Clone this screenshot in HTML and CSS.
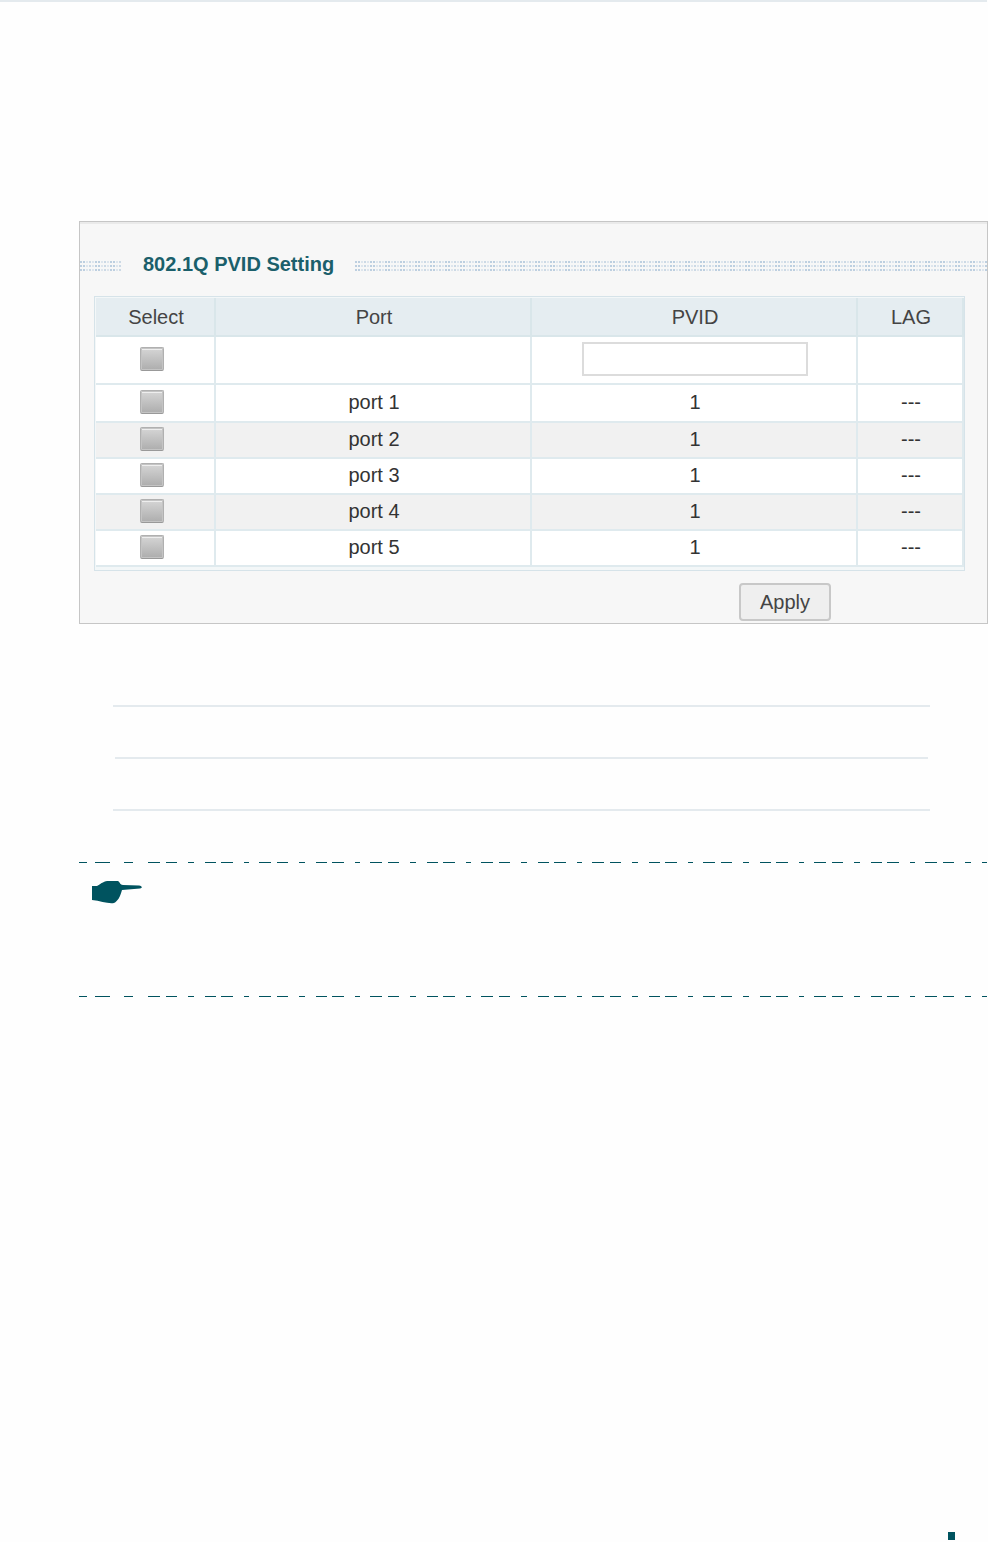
FILE: index.html
```html
<!DOCTYPE html>
<html lang="en">
<head>
<meta charset="utf-8">
<meta name="viewport" content="width=device-width, initial-scale=1">
<title>802.1Q PVID Setting</title>
<link rel="stylesheet" href="styles.css">
</head>
<body>
<div class="page">
  <header class="topbar"></header>
  <main class="content">
    <form class="panel">
      <div class="heading">
        <span class="dots dots-lead"></span>
        <h1 class="title">802.1Q PVID Setting</h1>
        <span class="dots dots-fill"></span>
      </div>
      <div class="frame">
        <table class="ports">
          <colgroup><col class="c-select"><col class="c-port"><col class="c-pvid"><col class="c-lag"></colgroup>
          <thead>
            <tr><th scope="col">Select</th><th scope="col">Port</th><th scope="col">PVID</th><th scope="col">LAG</th></tr>
          </thead>
          <tbody>
            <tr class="edit"><td><input class="tick" type="checkbox" aria-label="Select all ports"></td><td></td><td><input class="pvid" type="text" aria-label="PVID"></td><td></td></tr>
            <tr class="first"><td><input class="tick" type="checkbox" aria-label="Select port 1"></td><td>port 1</td><td>1</td><td>---</td></tr>
            <tr class="alt"><td><input class="tick" type="checkbox" aria-label="Select port 2"></td><td>port 2</td><td>1</td><td>---</td></tr>
            <tr><td><input class="tick" type="checkbox" aria-label="Select port 3"></td><td>port 3</td><td>1</td><td>---</td></tr>
            <tr class="alt"><td><input class="tick" type="checkbox" aria-label="Select port 4"></td><td>port 4</td><td>1</td><td>---</td></tr>
            <tr><td><input class="tick" type="checkbox" aria-label="Select port 5"></td><td>port 5</td><td>1</td><td>---</td></tr>
          </tbody>
        </table>
      </div>
      <div class="actions"><button class="apply" type="button">Apply</button></div>
    </form>
    <section class="rules">
      <hr class="rule">
      <hr class="rule rule-inner">
      <hr class="rule">
    </section>
    <aside class="note">
      <div class="dash"></div>
      <svg class="hand" viewBox="0 0 50 24" aria-hidden="true">
        <path d="M0 6 L5 6 C10 3 12 1 17 1 H26 C28 2 28 5 31 5 L47 5.500 C50.500 6 50.500 8 48 8.500 L30 10 C28 17 26 21 22 23 C16 24 9 21 0 20 Z"/>
      </svg>
      <div class="dash"></div>
    </aside>
  </main>
  <footer class="footer"><span class="marker"></span></footer>
</div>
</body>
</html>
```
FILE: styles.css
```css
* { box-sizing: border-box; }
body {
  margin: 0;
  background: #fefefe;
  color: #444;
  font: 20px/24px "Liberation Sans", Arial, sans-serif;
}
.page { display: flex; flex-direction: column; min-height: 100vh; }
.topbar { height: 2px; margin-right: 1px; background: #e4eaee; }
.content { flex: 1; padding: 219px 0 0 79px; }

.panel {
  border: 1px solid #c6c6c6;
  background: #f7f7f7;
  box-shadow: inset 0 2px 0 #eaeaea;
  padding: 30px 0 2px;
}
.heading { display: flex; align-items: center; }
.title { margin: 0 21px 0 22px; color: #1b5f6b; font-size: 20px; line-height: 24px; }
.dots {
  height: 10px;
  margin-top: 4px;
  background:
    repeating-linear-gradient(180deg, transparent 0 2px, #f7f7f7 2px 4px),
    repeating-linear-gradient(90deg, #bdcfe0 0 2px, #f7f7f7 2px 3px, #bdcfe0 3px 5px, #f7f7f7 5px 6px, #dde5ed 6px 8px, #f7f7f7 8px 9px, #ccd9e5 9px 11px, #f7f7f7 11px 12px, #dde5ed 12px 14px, #f7f7f7 14px 15px);
}
.dots-lead { width: 41px; }
.dots-fill { flex: 1; }

.frame {
  margin: 20px 22px 0 14px;
  border: 1px solid #d6e3e9;
  padding: 1px 0 3px 1px;
  background: #f3f7f8;
}
.ports { width: 100%; table-layout: fixed; border-spacing: 0; }
.c-select { width: 120px; }
.c-port { width: 316px; }
.c-lag { width: 106px; }
.ports th, .ports td {
  height: 36px;
  padding: 0 0 0 2px;
  border: 0 solid #dfeaee;
  border-width: 0 2px 2px 0;
  text-align: center;
  vertical-align: middle;
}
.ports th { height: 39px; background: #e5edf1; border-color: #d9e6ea; font-weight: 400; }
.ports td { padding-bottom: 2px; background: #fff; color: #333; }
.ports .edit td { height: 48px; }
.ports .first td { height: 38px; }
.ports .alt td { background: #f1f1f1; }

.tick {
  appearance: none;
  display: block;
  width: 24px;
  height: 24px;
  margin: 0 auto 0 42px;
  border: 1px solid #b0b0b0;
  border-bottom-color: #999;
  border-radius: 2px;
  background: linear-gradient(#d6d6d6, #adadad);
  box-shadow: inset 0 0 0 1px #c4c4c4, inset 0 2px 0 #eee;
}
.tick:checked { background: #789; }
.pvid {
  display: block;
  width: 226px;
  height: 34px;
  margin: 0 auto;
  border: 2px solid #dcdcdc;
  background: #fff;
  font: inherit;
}
.actions { display: flex; justify-content: flex-end; padding: 12px 156px 0 0; }
.apply {
  width: 92px;
  height: 38px;
  padding: 0;
  border: 2px solid #c8c8c8;
  border-radius: 4px;
  background: #efefef;
  color: #444;
  font: inherit;
}

.rules {
  display: flex;
  flex-direction: column;
  gap: 50px;
  padding: 81px 58px 0 34px;
}
.rule { width: 100%; height: 2px; margin: 0; border: 0; background: #e4eaee; }
.rule-inner { width: auto; margin: 0 2px; }

.note { margin-top: 51px; }
.dash {
  height: 1px;
  margin-right: 1px;
  background:
    linear-gradient(90deg, #00535f 0 8px, #fefefe 8px 16px, #00535f 16px 31px, #fefefe 31px 45px, #00535f 45px 54px, #fefefe 54px) 0 0 / 69px 1px no-repeat,
    repeating-linear-gradient(90deg, #00535f 0 12px, #fefefe 12px 18px, #00535f 18px 29px, #fefefe 29px 40px, #00535f 40px 46px, #fefefe 46px 57px, #00535f 57px 68px, #fefefe 68px 73px, #00535f 73px 85px, #fefefe 85px 96px, #00535f 96px 101px, #fefefe 101px 111px) 69px 0 no-repeat;
}
.hand { display: block; width: 50px; height: 24px; margin: 17px 0 92px 13px; fill: #00535f; }

.footer { display: flex; justify-content: flex-end; padding: 0 33px 2px 0; }
.marker { width: 7px; height: 8px; background: #00535f; }
```
